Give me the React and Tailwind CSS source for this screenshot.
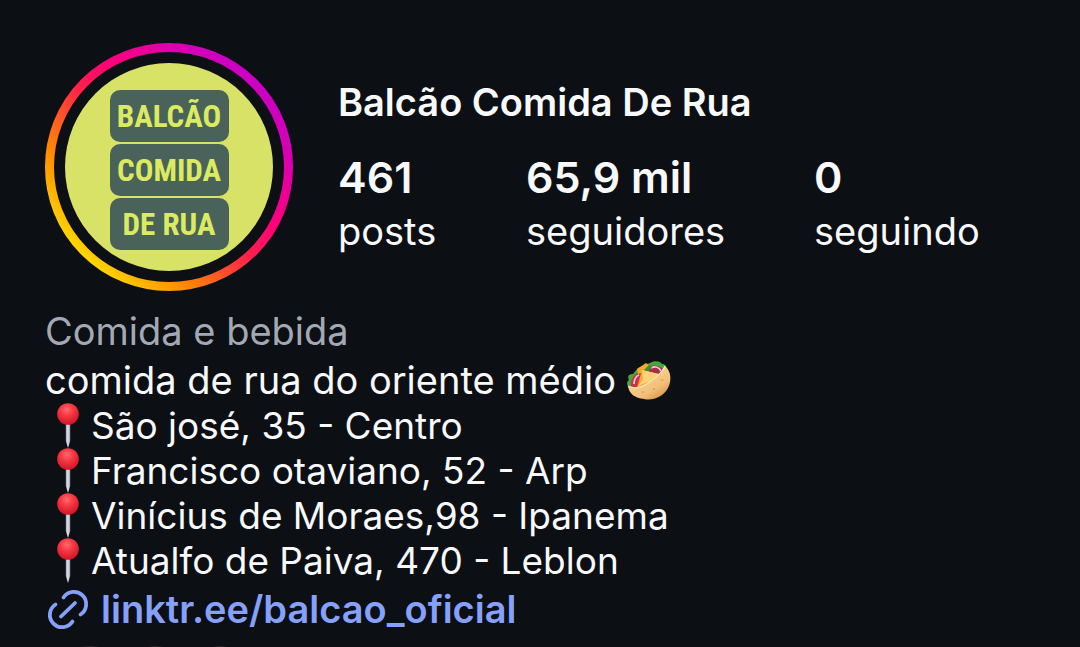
const stats = [
  { value: "461", label: "posts" },
  { value: "65,9 mil", label: "seguidores" },
  { value: "0", label: "seguindo" },
];

const addresses = [
  "São josé, 35 - Centro",
  "Francisco otaviano, 52 - Arp",
  "Vinícius de Moraes,98 - Ipanema",
  "Atualfo de Paiva, 470 - Leblon",
];

const signCls =
  "flex h-[52px] w-[119px] items-center justify-center rounded-[10px] bg-[#49635a] leading-none";

const followerCls = "size-[74px] rounded-full bg-[#2b2522]";

function StoryRing() {
  return (
    <svg viewBox="0 0 248 248" className="absolute inset-0 size-full" aria-hidden="true">
      <defs>
        <linearGradient id="ring" x1="0" y1="1" x2="1" y2="0">
          <stop offset="0.14" stopColor="#ffd400" />
          <stop offset="0.28" stopColor="#ff8c00" />
          <stop offset="0.48" stopColor="#ff1f4b" />
          <stop offset="0.6" stopColor="#ff007a" />
          <stop offset="0.78" stopColor="#d800b4" />
          <stop offset="0.88" stopColor="#c800c8" />
        </linearGradient>
      </defs>
      <circle cx="124" cy="124" r="119.5" fill="none" stroke="url(#ring)" strokeWidth="9" />
    </svg>
  );
}

function Avatar() {
  return (
    <div className="relative flex size-[248px] shrink-0 items-center justify-center">
      <StoryRing />
      <div className="flex size-[208px] flex-col items-center justify-center gap-[2px] rounded-full bg-[#d8e267] pt-1.5 font-['Roboto_Condensed','Liberation_Sans_Narrow','Liberation_Sans',sans-serif] text-[31px] font-bold text-[#dcea62]">
        <span className={signCls}>BALCÃO</span>
        <span className={signCls}>COMIDA</span>
        <span className={signCls}>DE RUA</span>
      </div>
    </div>
  );
}

function PinIcon() {
  return (
    <svg viewBox="0 0 46 45" className="h-[45px] w-[46px] shrink-0" aria-hidden="true">
      <defs>
        <radialGradient id="pinHead" cx="0.45" cy="0.3" r="0.7">
          <stop offset="0" stopColor="#ff6b70" />
          <stop offset="0.4" stopColor="#f93a44" />
          <stop offset="1" stopColor="#cf1425" />
        </radialGradient>
        <linearGradient id="pinNeedle" x1="0" x2="1" y1="0" y2="0">
          <stop offset="0" stopColor="#9a9dad" />
          <stop offset="0.45" stopColor="#e3e4ee" />
          <stop offset="1" stopColor="#9a9cac" />
        </linearGradient>
      </defs>
      <path d="M20.8 20h4.4v18l-2.2 7-2.2-7z" fill="url(#pinNeedle)" />
      <circle cx="23" cy="11" r="10.8" fill="url(#pinHead)" />
    </svg>
  );
}

function FlatbreadIcon() {
  return (
    <svg viewBox="0 0 46 42" className="h-[42px] w-[46px] shrink-0" aria-hidden="true">
      <defs>
        <linearGradient id="bread" x1="0.25" y1="0.3" x2="0.8" y2="1">
          <stop offset="0" stopColor="#fbd596" />
          <stop offset="0.6" stopColor="#f2bf7a" />
          <stop offset="1" stopColor="#d6903f" />
        </linearGradient>
      </defs>
      {/* filling */}
      <path d="M3 28c-2-3-3-6 0-8-2-4 0-6 4-6l5-6 12-5c4-3 11-2 12 1 3 0 5 2 4 5L20 27z" fill="#46a63f" />
      <path d="M5 26c-1-6 3-12 9-14l5 12-8 4z" fill="#cf3246" />
      <path d="M21 8c5-4 11-3 16 1l-8 10-9-5z" fill="#a5304a" />
      <path d="M25 8c4-2 8-1 10 3M8 24c0-4 2-8 5-9" fill="none" stroke="#efc9d6" strokeWidth="1.8" />
      <path d="M11 9l9-6 3 2-5 7-6 2z" fill="#f3a92c" />
      <path d="M17 11l6-6 3 2-5 6z" fill="#36912f" />
      {/* folded corner of the bread */}
      <path d="M16 10l17 4-7 9-15 5z" fill="#f9a93a" />
      <path d="M16 10l17 4-9 7-12 5 5-7z" fill="#ffd277" />
      <path d="M2 26c6 3 13 2 20-3 8-5 14-10 17-17 6 5 7 14 3 22-5 9-15 13-24 11C9 38 3 34 2 26z" fill="url(#bread)" />
      <path d="M2 26c6 3 13 2 20-3 8-5 14-10 17-17" fill="none" stroke="#ffe6b5" strokeWidth="1.2" />
      <ellipse cx="36" cy="20" rx="1.6" ry="1.1" fill="#e2aa62" />
      <ellipse cx="17" cy="32" rx="1.6" ry="1.1" fill="#e2aa62" />
      <ellipse cx="28" cy="29" rx="1.2" ry="0.9" fill="#dca058" />
    </svg>
  );
}

function LinkIcon() {
  return (
    <svg
      viewBox="0 0 44 44"
      className="size-[44px] shrink-0"
      fill="none"
      stroke="currentColor"
      strokeWidth="3.8"
      strokeLinecap="round"
      aria-hidden="true"
    >
      <path d="M18.5 9.5A12.3 12.3 0 1 1 35.5 26.500" />
      <path d="M10.5 16.500A12.300 12.300 0 1 0 27.500 33.500" />
      <path d="M16 28.500l14-13.500" />
    </svg>
  );
}

export default function App() {
  return (
    <main className="flex h-screen flex-col overflow-hidden bg-[#0c0f14] px-[45px] pt-[43px] font-['Inter',sans-serif] text-[38px] leading-[45px] text-[#f8f9fb]">
      <header className="flex shrink-0 gap-[45px]">
        <Avatar />
        <div className="pt-[37px]">
          <h1 className="font-semibold">Balcão Comida De Rua</h1>
          <dl className="mt-5 grid grid-cols-[188px_288px_auto]">
            {stats.map((s) => (
              <div key={s.label} className="flex flex-col-reverse">
                <dt>{s.label}</dt>
                <dd className="text-[43px] leading-[64px] font-semibold">{s.value}</dd>
              </div>
            ))}
          </dl>
        </div>
      </header>

      <section className="mt-[18px] shrink-0">
        <p className="mb-1 text-[#a2a9b4]">Comida e bebida</p>
        <p className="flex items-center gap-[10px]">
          comida de rua do oriente médio <FlatbreadIcon />
        </p>
        <ul className="text-[37px]">
          {addresses.map((address) => (
            <li key={address} className="flex">
              <PinIcon />
              {address}
            </li>
          ))}
        </ul>
        <a href="#link" className="mt-1 flex items-center gap-3 font-semibold text-[#86a1fb]">
          <LinkIcon />
          linktr.ee/balcao_oficial
        </a>
      </section>

      {/* followers you know, starts at the fold */}
      <div className="mt-[14px] flex shrink-0 -space-x-[9px] pl-2">
        <span className={followerCls} />
        <span className={followerCls} />
        <span className={followerCls} />
      </div>
    </main>
  );
}
